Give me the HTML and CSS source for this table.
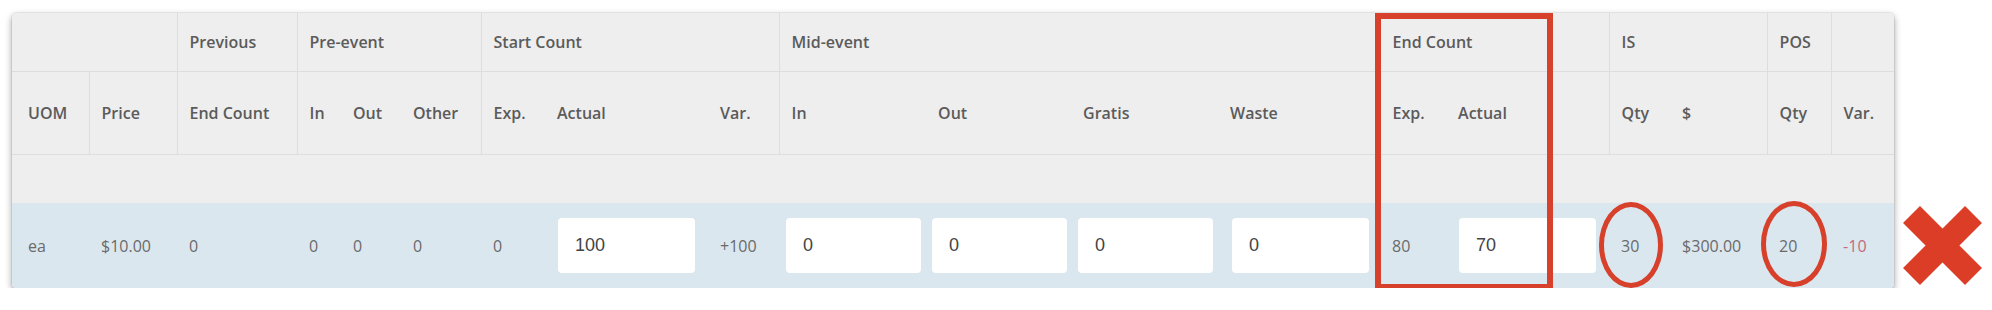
FILE: index.html
```html
<!DOCTYPE html>
<html lang="en">
<head>
<meta charset="utf-8">
<title>Count sheet</title>
<link rel="stylesheet" href="styles.css">
</head>
<body>
<div class="page">
  <div class="card">
    <table class="count-table">
      <colgroup>
        <col class="w77"><col class="w88"><col class="w120">
        <col class="w44"><col class="w60"><col class="w80">
        <col class="w64"><col class="w163"><col class="w71">
        <col class="w147"><col class="w145"><col class="w147"><col class="w162">
        <col class="w66"><col class="w163">
        <col class="w61"><col class="w97">
        <col class="w64"><col class="w63">
      </colgroup>
      <thead>
        <tr class="group-row">
          <th colspan="2" class="first"></th>
          <th class="sep">Previous</th>
          <th colspan="3" class="sep">Pre-event</th>
          <th colspan="3" class="sep">Start Count</th>
          <th colspan="4" class="sep">Mid-event</th>
          <th colspan="2" class="sep">End Count</th>
          <th colspan="2" class="sep">IS</th>
          <th class="sep">POS</th>
          <th class="sep"></th>
        </tr>
        <tr class="label-row">
          <th class="first">UOM</th>
          <th class="sep">Price</th>
          <th class="sep">End Count</th>
          <th class="sep">In</th><th>Out</th><th>Other</th>
          <th class="sep">Exp.</th><th>Actual</th><th>Var.</th>
          <th class="sep">In</th><th>Out</th><th>Gratis</th><th>Waste</th>
          <th class="sep">Exp.</th><th>Actual</th>
          <th class="sep">Qty</th><th>$</th>
          <th class="sep">Qty</th>
          <th class="sep">Var.</th>
        </tr>
        <tr class="spacer-row"><th colspan="19"></th></tr>
      </thead>
      <tbody>
        <tr class="item-row">
          <td class="first">ea</td>
          <td>$10.00</td>
          <td>0</td>
          <td>0</td><td>0</td><td>0</td>
          <td>0</td>
          <td class="field"><input class="count-input" type="text" value="100"></td>
          <td>+100</td>
          <td class="field tight"><input class="count-input" type="text" value="0"></td>
          <td class="field tighter"><input class="count-input" type="text" value="0"></td>
          <td class="field tight"><input class="count-input" type="text" value="0"></td>
          <td class="field wide"><input class="count-input" type="text" value="0"></td>
          <td>80</td>
          <td class="field"><input class="count-input" type="text" value="70"></td>
          <td>30</td>
          <td>$300.00</td>
          <td>20</td>
          <td class="negative">-10</td>
        </tr>
      </tbody>
    </table>
  </div>
  <svg class="status-x" width="79" height="79" viewBox="0 0 79 79" aria-label="Mismatch">
    <path d="M8.5 8.5 L70.5 70.5 M70.5 8.5 L8.5 70.5" stroke="#db3d26" stroke-width="24" fill="none"/>
  </svg>
  <div class="mark-box"></div>
  <div class="mark-ring ring-is"></div>
  <div class="mark-ring ring-pos"></div>
</div>
</body>
</html>
```

FILE: styles.css
```css
html, body {
  margin: 0;
  padding: 0;
  background: #ffffff;
}

.page {
  position: relative;
  display: flex;
  align-items: flex-start;
  gap: 9px;
  padding: 13px 0 0 12px;
  font-family: "Open Sans", "Liberation Sans", sans-serif;
}

.card {
  width: 1882px;
  border-radius: 4px;
  overflow: hidden;
  background: #eeeeee;
  box-shadow: 0 0 0 1px rgba(0, 0, 0, 0.05), 0 3px 7px rgba(0, 0, 0, 0.38);
}

.count-table {
  width: 1882px;
  table-layout: fixed;
  border-collapse: collapse;
  border-spacing: 0;
}

.w44 { width: 44px; }
.w60 { width: 60px; }
.w61 { width: 61px; }
.w63 { width: 63px; }
.w64 { width: 64px; }
.w66 { width: 66px; }
.w71 { width: 71px; }
.w77 { width: 77px; }
.w80 { width: 80px; }
.w88 { width: 88px; }
.w97 { width: 97px; }
.w120 { width: 120px; }
.w145 { width: 145px; }
.w147 { width: 147px; }
.w162 { width: 162px; }
.w163 { width: 163px; }

.count-table th,
.count-table td {
  padding: 0 0 0 12px;
  text-align: left;
  vertical-align: middle;
  white-space: nowrap;
  font-size: 16px;
  line-height: 22px;
}

.count-table th {
  font-weight: 600;
  color: #5b5b5b;
  background: #eeeeee;
}

.count-table th.sep {
  border-left: 1px solid #dddddd;
}

.count-table th.first,
.count-table td.first {
  padding-left: 16px;
}

.group-row th {
  height: 58px;
  border-bottom: 1px solid #dddddd;
}

.label-row th {
  height: 82px;
  border-bottom: 1px solid #dddddd;
}

.spacer-row th {
  height: 48px;
  padding: 0;
}

.item-row td {
  height: 85px;
  background: #dbe7ef;
  color: #6a6a6a;
  font-weight: 400;
}

.count-table td.field {
  padding: 0 13px 0 13px;
}

.count-table td.field.tight {
  padding: 0 5px 0 7px;
}

.count-table td.field.tighter {
  padding: 0 4px 0 6px;
}

.count-table td.field.wide {
  padding: 0 11px 0 14px;
}

.count-input {
  display: block;
  box-sizing: border-box;
  width: 100%;
  height: 55px;
  margin: 0;
  padding: 0 17px;
  border: none;
  border-radius: 4px;
  background: #ffffff;
  font-family: "Liberation Sans", Arial, sans-serif;
  font-size: 18px;
  color: #444444;
  outline: none;
}

.count-table td.negative {
  color: #c46a7c;
}

.status-x {
  display: block;
  flex: none;
  margin-top: 193px;
}

.mark-box {
  position: absolute;
  left: 1375px;
  top: 13px;
  width: 178px;
  height: 277px;
  box-sizing: border-box;
  border: 6px solid #d7402b;
}

.mark-ring {
  position: absolute;
  box-sizing: border-box;
  border: 5px solid #d7402b;
  border-radius: 50%;
}

.ring-is {
  left: 1599px;
  top: 202px;
  width: 64px;
  height: 86px;
}

.ring-pos {
  left: 1761px;
  top: 201px;
  width: 66px;
  height: 86px;
}
```
